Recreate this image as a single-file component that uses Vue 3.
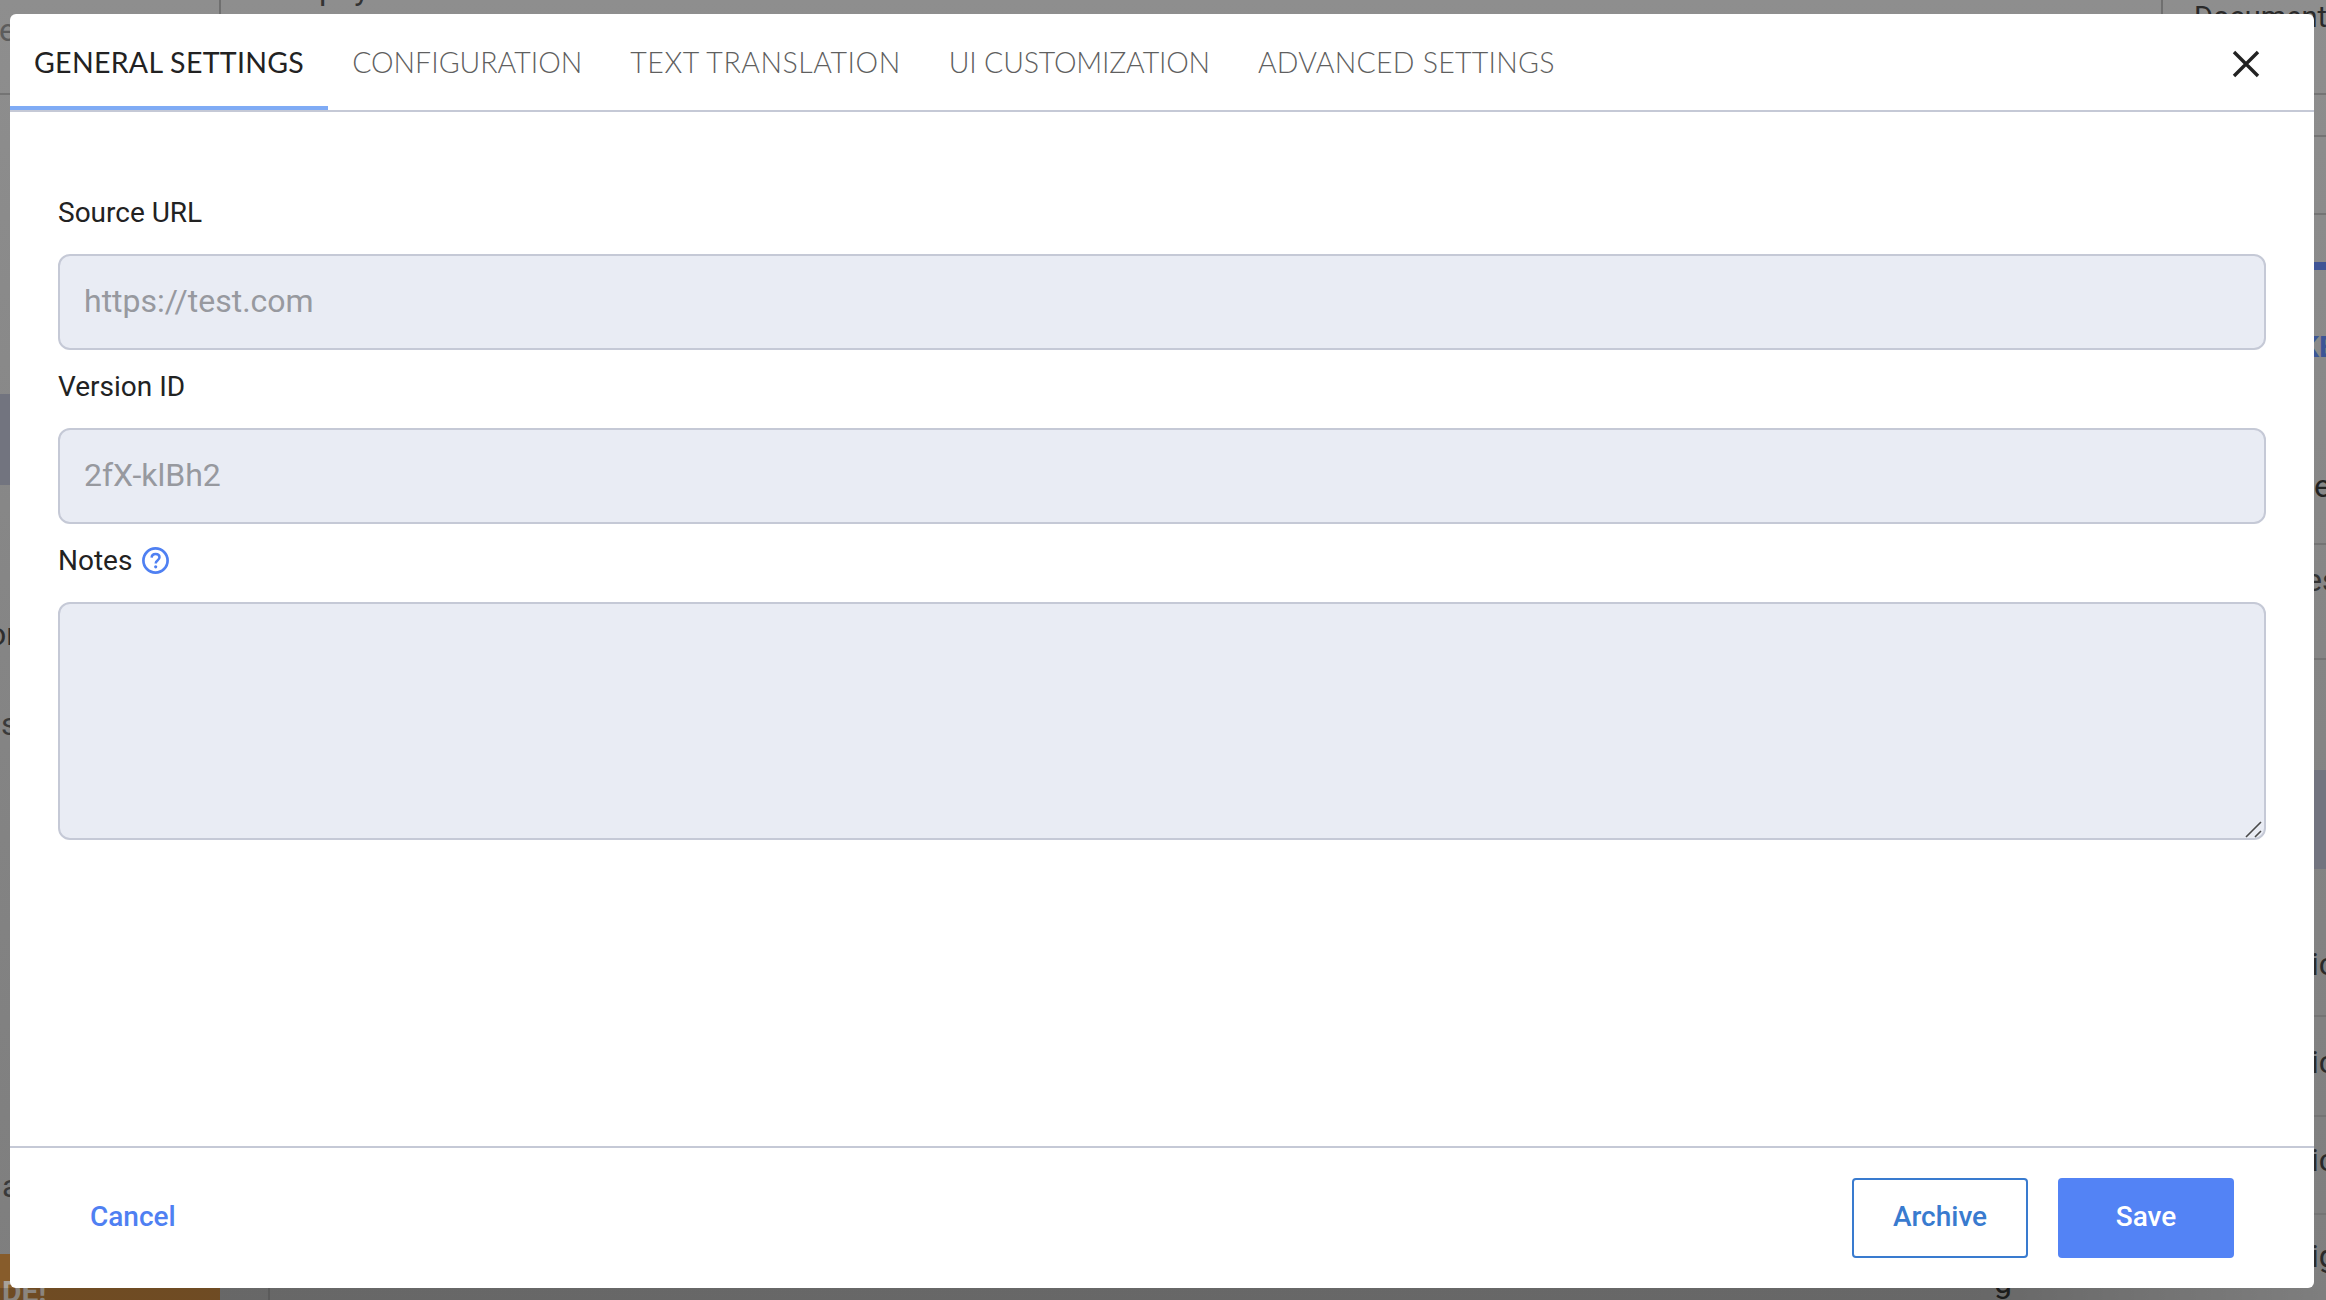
<script setup>
const tabs = [
  { label: 'GENERAL SETTINGS', spacing: 0.3 },
  { label: 'CONFIGURATION', spacing: 0 },
  { label: 'TEXT TRANSLATION', spacing: 0.55 },
  { label: 'UI CUSTOMIZATION', spacing: -0.18 },
  { label: 'ADVANCED SETTINGS', spacing: 0.26 }
]
const hLines = [
  { side: 'l', y: 93 },
  { side: 'r', y: 93 }, { side: 'r', y: 135 }, { side: 'r', y: 213 }, { side: 'r', y: 543 },
  { side: 'r', y: 658 }, { side: 'r', y: 1015 }, { side: 'r', y: 1115 }, { side: 'r', y: 1213 }
]
const frags = [
  { t: 'e', x: -1, y: 10, c: '#5c5c5c' },
  { t: 'or', x: -12, y: 614, c: '#2e2e2e' },
  { t: 's', x: 1, y: 704, c: '#3a3a3a' },
  { t: 'a', x: 2, y: 1166, c: '#3a3a3a' },
  { t: 'Document', x: 2194, y: -3, c: '#2a2a2a', s: 29 },
  { t: 'KE', x: 2300, y: 327, c: '#3c5596', w: 700, s: 30 },
  { t: 'e', x: 2314, y: 466, c: '#222' },
  { t: 'es', x: 2305, y: 560, c: '#333' },
  { t: 'ic', x: 2311, y: 944, c: '#2a2a2a' },
  { t: 'ic', x: 2311, y: 1042, c: '#2a2a2a' },
  { t: 'ic', x: 2311, y: 1140, c: '#2a2a2a' },
  { t: 'ig', x: 2311, y: 1236, c: '#2a2a2a' },
  { t: 'g', x: 1994, y: 1262, c: '#222' },
  { t: 'pay', x: 319, y: -31, c: '#333' }
]
</script>

<template>
  <div class="page">
    <div class="backdrop" aria-hidden="true">
      <div class="vline" style="left: 219px; top: 0; height: 14px"></div>
      <div class="vline" style="left: 2161px; top: 0; height: 14px"></div>
      <div class="vline" style="left: 268px; top: 1288px; height: 12px"></div>
      <div class="band" style="left: 0; width: 10px; top: 394px; height: 91px"></div>
      <div class="band" style="left: 2314px; width: 12px; top: 770px; height: 99px"></div>
      <div class="band blue" style="left: 2314px; width: 12px; top: 262px; height: 8px"></div>
      <div class="orange"><span>DE!</span></div>
      <div
        v-for="(l, i) in hLines"
        :key="i"
        class="hline"
        :style="{ top: l.y + 'px', left: l.side === 'l' ? '0' : '2314px', width: l.side === 'l' ? '10px' : '12px' }"
      ></div>
      <span
        v-for="(f, i) in frags"
        :key="'f' + i"
        class="frag"
        :style="{ left: f.x + 'px', top: f.y + 'px', color: f.c, fontSize: (f.s || 32) + 'px', fontWeight: f.w || 400 }"
      >{{ f.t }}</span>
      <div class="shade"></div>
    </div>

    <section class="modal">
      <header class="head">
        <nav class="tabs">
          <a
            v-for="(t, i) in tabs"
            :key="t.label"
            class="tab"
            :class="{ active: i === 0 }"
            :style="{ letterSpacing: t.spacing + 'px' }"
          >{{ t.label }}</a>
        </nav>
        <button class="close" aria-label="Close">
          <svg width="30" height="30" viewBox="0 0 30 30">
            <path d="M3 3 L27 27 M27 3 L3 27" stroke="#222" stroke-width="3.4" fill="none" />
          </svg>
        </button>
      </header>

      <div class="body">
        <label class="label">Source URL</label>
        <input class="field" disabled placeholder="https://test.com" />
        <label class="label">Version ID</label>
        <input class="field" disabled value="2fX-klBh2" />
        <label class="label">Notes
          <svg class="help" width="27" height="27" viewBox="0 0 27 27">
            <circle cx="13.5" cy="13.5" r="12.1" stroke="#4f80f2" stroke-width="2.7" fill="none" />
            <path d="M9.6 10.6 C9.7 8.1 11.4 6.9 13.6 6.9 C15.9 6.9 17.5 8.3 17.5 10.3 C17.5 11.9 16.6 12.7 15.5 13.5 C14.4 14.3 13.7 14.9 13.7 16.4" stroke="#4f80f2" stroke-width="2.5" fill="none" />
            <circle cx="13.7" cy="19.8" r="1.6" fill="#4f80f2" />
          </svg>
        </label>
        <div class="area-wrap">
          <textarea class="field area" disabled></textarea>
          <svg class="grip" width="18" height="18" viewBox="0 0 18 18">
            <path d="M1 17 L16 2 M10 17 L16 11" stroke="#4a4a4a" stroke-width="1.6" fill="none" />
          </svg>
        </div>
      </div>

      <footer class="foot">
        <a class="cancel">Cancel</a>
        <div class="actions">
          <button class="btn outline">Archive</button>
          <button class="btn solid">Save</button>
        </div>
      </footer>
    </section>
  </div>
</template>

<style>
html, body { margin: 0; overflow: hidden; }
</style>

<style scoped>
.page {
  position: relative;
  width: 2326px;
  height: 1300px;
  box-sizing: border-box;
  padding: 14px 12px 12px 10px;
  overflow: hidden;
  background: linear-gradient(180deg, #8e8e8e 0%, #858585 50%, #7e7e7e 100%);
  font-family: Roboto, sans-serif;
}
.backdrop { position: absolute; inset: 0; }
.vline { position: absolute; width: 2px; background: #6f6f6f; }
.hline { position: absolute; height: 2px; background: #747474; }
.band { position: absolute; background: #72747f; }
.band.blue { background: #3f5596; }
.orange {
  position: absolute;
  left: 0;
  top: 1254px;
  width: 220px;
  height: 46px;
  background: #875c2b;
  overflow: hidden;
}
.orange span {
  position: absolute;
  left: 2px;
  top: 20px;
  font: 700 30px Roboto, sans-serif;
  color: #a9a29a;
}
.shade {
  position: absolute;
  left: 0;
  right: 0;
  top: 1288px;
  height: 12px;
  background: linear-gradient(90deg, rgba(0, 0, 0, 0.18) 0%, rgba(0, 0, 0, 0.18) 85%, rgba(0, 0, 0, 0) 100%);
}
.frag {
  position: absolute;
  line-height: 40px;
  white-space: nowrap;
}
.modal {
  position: relative;
  width: 2304px;
  height: 1274px;
  display: flex;
  flex-direction: column;
  background: #fff;
  border-radius: 6px;
}
.head {
  height: 96px;
  flex: none;
  display: flex;
  justify-content: space-between;
  border-bottom: 2px solid #c5c9d6;
}
.tabs { display: flex; }
.tab {
  padding: 5px 24px 0;
  height: 87px;
  line-height: 87px;
  font-family: Lato, sans-serif;
  font-size: 28.5px;
  font-weight: 300;
  color: #5f5f5f;
  white-space: nowrap;
  border-bottom: 4px solid transparent;
}
.tab.active {
  color: #222;
  border-bottom-color: #7fabf5;
  font-weight: 400;
}
.close {
  width: 30px;
  height: 30px;
  margin: 35px 53px 0 0;
  padding: 0;
  border: 0;
  background: none;
  line-height: 0;
}
.body {
  flex: 1;
  display: flex;
  flex-direction: column;
  padding: 77px 48px 0 48px;
}
.label {
  height: 46px;
  flex: none;
  display: flex;
  align-items: center;
  gap: 10px;
  font-size: 28px;
  color: #222;
  margin-bottom: 19px;
}
.field {
  box-sizing: border-box;
  display: block;
  flex: none;
  height: 96px;
  width: 100%;
  padding: 0 24px 2px;
  margin-bottom: 13px;
  background: #e9ecf4;
  border: 2px solid #c5c9d6;
  border-radius: 12px;
  font-family: Roboto, sans-serif;
  font-size: 32px;
  color: #97999f;
  outline: none;
  -webkit-text-fill-color: #97999f;
  opacity: 1;
}
.field::placeholder { color: #97999f; opacity: 1; }
.area-wrap { position: relative; }
.area {
  height: 238px;
  resize: none;
  margin: 0;
}
.grip {
  position: absolute;
  right: 3px;
  bottom: 2px;
}
.foot {
  height: 142px;
  flex: none;
  box-sizing: border-box;
  border-top: 2px solid #c5c9d6;
  display: flex;
  align-items: center;
  justify-content: space-between;
  padding: 0 80px;
}
.cancel {
  font-size: 28px;
  font-weight: 500;
  color: #4f80f2;
  margin-bottom: 3px;
}
.actions { display: flex; gap: 30px; }
.btn {
  box-sizing: border-box;
  width: 176px;
  height: 80px;
  padding: 0 0 3px;
  border-radius: 4px;
  font-family: Roboto, sans-serif;
  font-size: 28px;
  font-weight: 500;
}
.outline { background: #fff; border: 2.5px solid #397bcf; color: #397bcf; }
.solid { background: #5383f5; border: 0; color: #fff; }
.help { flex: none; }
</style>
